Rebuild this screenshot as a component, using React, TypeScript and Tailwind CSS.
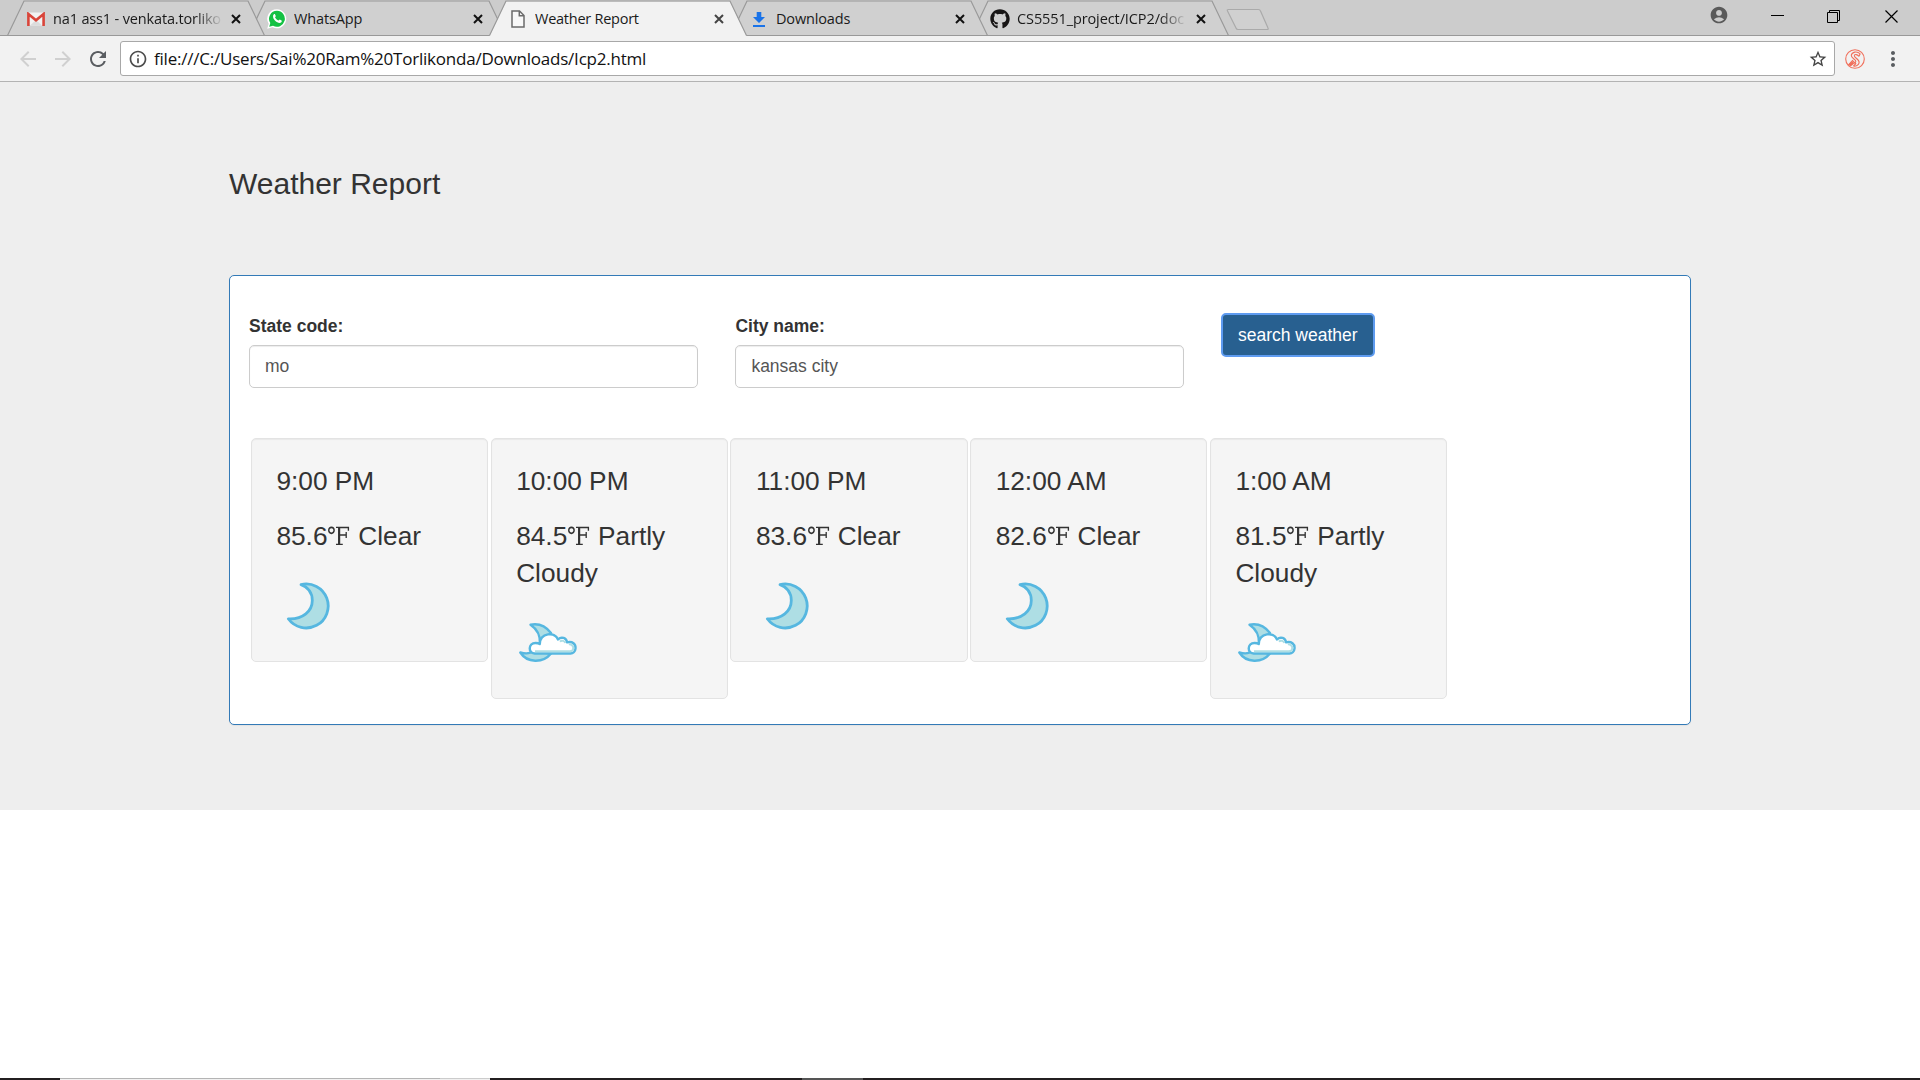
import type { ReactNode } from "react";
import { FaGithub } from "react-icons/fa";
import {
  MdAccountCircle,
  MdArrowBack,
  MdArrowForward,
  MdInfoOutline,
  MdMoreVert,
  MdRefresh,
  MdStarBorder,
} from "react-icons/md";

const uiFont = "font-['Open_Sans','Noto_Sans',sans-serif]";

function GmailIcon() {
  return (
    <svg width="18" height="14" viewBox="0 0 18 14">
      <rect x="0.5" y="0.5" width="17" height="13" rx="1" fill="#f2f2f2" />
      <path d="M3 13.5 9 8l6 5.500z" fill="#dcdcdc" />
      <path d="M1.400 14V2L9 8.200 16.600 2v12" fill="none" stroke="#d9453a" strokeWidth="2.600" />
    </svg>
  );
}

function WhatsAppIcon() {
  return (
    <svg width="20" height="20" viewBox="0 0 20 20">
      <path d="M10 .3a9.500 9.500 0 1 1-4.500 18L.2 19.800l1.500-5A9.500 9.500 0 0 1 10 .3z" fill="#fff" />
      <path d="M10 1.800a8 8 0 1 1-4 15l-3.800 1 1.100-3.700A8 8 0 0 1 10 1.800z" fill="#14c143" />
      <path
        d="M6.900 5.200c.5-.4 1-.3 1.200.2l.7 1.600c.1.400-.6 1-.8 1.300.7 1.500 2 2.700 3.500 3.300.4-.3.900-1.200 1.300-1.100l1.700.9c.5.300.3 1.300-.2 1.800-1.500 1.500-4.300.3-5.900-1.200C6.600 10.300 5 7 6.900 5.200z"
        fill="#fff"
      />
    </svg>
  );
}

function PageIcon() {
  return (
    <svg width="14" height="18" viewBox="0 0 14 18" fill="none" stroke="#6b6b6b" strokeWidth="1.500">
      <path d="M1 1h7.500L13 5.500V17H1z" fill="#f8f8f8" />
      <path d="M8.300 1v4.700H13" />
    </svg>
  );
}

function DownloadIcon() {
  return (
    <svg width="12" height="15" viewBox="0 0 12 15" fill="#1a73e8">
      <path d="M3.700 0h4.600v5H12l-6 6-6-6h3.700z" />
      <rect y="13" width="12" height="2" />
    </svg>
  );
}

function Close({ dark }: { dark: boolean }) {
  return (
    <svg width="10" height="10" viewBox="0 0 10 10" stroke={dark ? "#111" : "#444"} strokeWidth="2" className="shrink-0">
      <path d="M1 1l8 8M9 1l-8 8" />
    </svg>
  );
}

type TabProps = {
  icon: ReactNode;
  title: string;
  active?: boolean;
  fade?: boolean;
  z: string;
  spacing: string;
  closeOffset?: string;
};

function Tab({ icon, title, active = false, fade = false, z, spacing, closeOffset = "-mr-px" }: TabProps) {
  return (
    <div className={`relative -mr-[17px] h-9 w-[258px] shrink-0 ${z}`}>
      <svg className="absolute inset-0" width="258" height="36" viewBox="0 0 258 36">
        <path d="M.5 36 17 1.500h224L257.500 36z" fill={active ? "#f2f2f2" : "#d0d0d0"} />
        <path d="M.5 35.500 17 1h224l16.500 34.500" fill="none" stroke="#999" strokeWidth="1.200" />
        {!active && <path d="M0 35.500h258" stroke="#999" />}
      </svg>
      <div className="relative flex h-full items-center pt-[2px] pl-[18px] pr-6">
        <div className="flex w-[21px] shrink-0 justify-center">{icon}</div>
        <div
          className={`ml-[7px] w-[170px] overflow-hidden whitespace-nowrap text-[14.500px] leading-5 text-[#1a1a1a] ${spacing} ${
            fade ? "[mask-image:linear-gradient(to_right,black_84%,transparent_100%)]" : ""
          }`}
        >
          {title}
        </div>
        <div className={`ml-auto flex ${closeOffset}`}>
          <Close dark={!active} />
        </div>
      </div>
    </div>
  );
}

function TitleBar() {
  return (
    <div className="flex h-9 border-b border-[#999] bg-[#ccc] pl-[7px]">
      <Tab
        icon={<GmailIcon />}
        title="na1 ass1 - venkata.torliko"
        fade
        z="z-[3]"
        spacing="tracking-[-0.15px]"
        closeOffset="mr-0"
      />
      <Tab icon={<WhatsAppIcon />} title="WhatsApp" z="z-[2]" spacing="tracking-[-0.15px]" />
      <Tab icon={<PageIcon />} title="Weather Report" active z="z-[5]" spacing="tracking-[-0.25px]" />
      <Tab icon={<DownloadIcon />} title="Downloads" z="z-[2]" spacing="tracking-[-0.15px]" />
      <Tab
        icon={<FaGithub className="size-5 text-[#181616]" />}
        title="CS5551_project/ICP2/doc"
        fade
        z="z-[1]"
        spacing="tracking-[-0.1px]"
      />
      <svg className="mt-2 ml-[14px] shrink-0" width="44" height="23" viewBox="0 0 44 23">
        <path
          d="M2.500 1.500h30q1.500 0 2 1.500l7.500 17q.8 1.500-1 1.500H12q-1.500 0-2-1.500L1.500 3q-.8-1.500 1-1.500z"
          fill="#d0d0d0"
          stroke="#aaa"
          strokeWidth="1.200"
        />
      </svg>
      <div className="ml-auto flex pr-[22px] text-black">
        <MdAccountCircle className="mt-[5px] mr-[42px] size-5 text-[#5a5a5a]" />
        <svg className="mt-[9px] mr-[43px]" width="13" height="13" stroke="currentColor">
          <path d="M0 6.500h13" />
        </svg>
        <svg className="mt-[10px] mr-[45px]" width="13" height="13" fill="none" stroke="currentColor">
          <path d="M.5 2.500h10v10H.5zM2.500 2.500v-2h10v10h-2" />
        </svg>
        <svg className="mt-[10px]" width="13" height="13" stroke="currentColor" strokeWidth="1.200">
          <path d="M.5.5l12 12M12.500.5l-12 12" />
        </svg>
      </div>
    </div>
  );
}

function ExtensionIcon() {
  return (
    <svg width="20" height="20" viewBox="0 0 20 20" fill="none" stroke="#f0705c" strokeWidth="1.100">
      <circle cx="10" cy="10" r="9.300" />
      <path d="M15.200 4.800C12 1.800 7 2.800 6.300 6.200c-.4 3.300 4.700 4 4.500 6.200-.2 1.800-1.800 2.200-3.300 1.400M14 7.300C12.300 5.300 9.800 5 9.300 6.600c-.3 2.200 5.300 3.500 4.800 7.200-.5 2.400-3.300 3.600-5.600 3.200" />
      <path d="M15.200 4.800 14 7.300M3.500 15.800l4-4.300 3.300 3.200L8.500 17" />
      <path d="M4 15.800 7.500 13l.8 1.500-2.500 2.200z" fill="#f0705c" />
    </svg>
  );
}

function Toolbar() {
  return (
    <div className="flex h-[46px] items-center border-b border-[#b3b3b3] bg-[#f2f2f2]">
      <MdArrowBack className="ml-4 size-6 text-[#d0d0d0]" />
      <MdArrowForward className="ml-[11px] size-6 text-[#d0d0d0]" />
      <MdRefresh className="ml-[11px] size-6 text-[#5a5d61]" />
      <div className="ml-[10px] flex h-[35px] w-[1715px] items-center rounded-[3px] border border-[#a8a8a8] bg-white">
        <MdInfoOutline className="ml-[7px] size-[20px] text-[#4c4c4c]" />
        <span className="ml-[6px] whitespace-nowrap text-[17px] tracking-[-0.22px] text-[#111]">
          file:///C:/Users/Sai%20Ram%20Torlikonda/Downloads/Icp2.html
        </span>
        <MdStarBorder className="ml-auto mr-[6px] size-5 text-[#444]" />
      </div>
      <div className="ml-[10px]">
        <ExtensionIcon />
      </div>
      <MdMoreVert className="ml-[16px] size-6 text-[#5a5d61]" />
    </div>
  );
}

function MoonIcon() {
  return (
    <svg width="62" height="62" viewBox="0 0 62 62" fill="#aedee4" stroke="#56b7e0" strokeWidth="2.800" strokeLinejoin="round">
      <path d="M24 10.600A22 22 0 1 1 11.300 44.800C26 45.500 35.300 37 35.300 26.500 35.300 19 31 13 24 10.600z" />
    </svg>
  );
}

function CloudMoonIcon() {
  return (
    <svg width="62" height="62" viewBox="0 0 62 62" fill="#aedee4" stroke="#56b7e0" strokeWidth="2.400" strokeLinejoin="round">
      <path d="M13.500 13.700C22 12 29 15.500 34 22l-11 11C23.500 25 20 18 13.500 13.700z" />
      <path d="M3.300 41.500C9 43 14 42 16 40l18 2.500C26 52.500 10 52 3.300 41.500z" />
      <path
        d="M17.500 42.500c-6.500 0-6.500-10.500 1-10.500 1.500 0 3 0 4.300 1 .5-11.500 15-12.500 18.200-4.500 3.500-3.500 8.500-1.500 9 2.800C55.500 30 59 33 58.500 37.500c-.3 3-2.500 5-5 5z"
        fill="#fff"
      />
      <path
        d="M18 40.300h35c2 0 3.300-1.500 3.300-3.300 0-2.500-2-4-4.500-3.700M48.300 32c-.8-2-3-3.200-5.500-1.500"
        fill="none"
        stroke="#aedee4"
        strokeWidth="2"
      />
    </svg>
  );
}

type Hour = { time: string; temp: string; sky: string; cloudy?: boolean };

const hours: Hour[] = [
  { time: "9:00 PM", temp: "85.6", sky: "Clear" },
  { time: "10:00 PM", temp: "84.5", sky: "Partly Cloudy", cloudy: true },
  { time: "11:00 PM", temp: "83.6", sky: "Clear" },
  { time: "12:00 AM", temp: "82.6", sky: "Clear" },
  { time: "1:00 AM", temp: "81.5", sky: "Partly Cloudy", cloudy: true },
];

function HourCard({ time, temp, sky, cloudy }: Hour) {
  return (
    <div className="w-[237.250px] rounded-[5px] border border-[#e3e3e3] bg-[#f5f5f5] py-[23.750px] pr-[23px] pl-[24.500px] text-[26.250px] leading-[36.750px] shadow-[inset_0_1px_1px_rgba(0,0,0,0.05)]">
      <p className="mb-[18.750px]">{time}</p>
      <p className="mb-[18.750px]">
        {temp}
        <span className="inline-block w-[23.500px] origin-left scale-x-[0.880] font-['Liberation_Serif','DejaVu_Serif',serif] text-[25px] leading-none">
          ℉
        </span>{" "}
        {sky}
      </p>
      <div className="ml-[0.500px] h-[63.500px]">{cloudy ? <CloudMoonIcon /> : <MoonIcon />}</div>
    </div>
  );
}

function Field({ label, value }: { label: string; value: string }) {
  return (
    <label className="mt-px block w-[449px]">
      <span className="mb-[6px] block font-bold">{label}</span>
      <input
        defaultValue={value}
        className="block h-[43px] w-full rounded-[5px] border border-[#ccc] bg-white px-[15px] text-[#555] shadow-[inset_0_1px_1px_rgba(0,0,0,0.075)]"
      />
    </label>
  );
}

export default function App() {
  return (
    <div className="flex h-[1080px] w-[1920px] flex-col overflow-hidden bg-white">
      <header className={uiFont}>
        <TitleBar />
        <Toolbar />
      </header>

      <main className="h-[728px] bg-[#eee] px-[229px] pt-[85px] font-['Liberation_Sans',Arial,sans-serif] text-[17.500px] leading-[25px] text-[#333]">
        <h1 className="text-[30px] leading-[33px]">Weather Report</h1>
        <section className="mt-[75px] h-[450px] rounded-[5px] border border-[#337ab7] bg-white px-[19px] pt-[37px] shadow-[0_1px_1px_rgba(0,0,0,0.05)]">
          <div className="flex items-start gap-[37.400px]">
            <Field label="State code:" value="mo" />
            <Field label="City name:" value="kansas city" />
            <button className="mt-px h-[42px] w-[152px] rounded-[4px] bg-[#286090] pt-px text-white outline-2 outline-[#5e9bf0] -outline-offset-1">
              search weather
            </button>
          </div>
          <div className="mt-[50px] ml-[1.900px] flex items-start gap-[2.500px]">
            {hours.map((h) => (
              <HourCard key={h.time} {...h} />
            ))}
          </div>
        </section>
      </main>

      <footer className="mt-auto flex h-[2px] bg-[#231f20]">
        <div className="ml-[60px] w-[380px] border-t border-[#b4b4b4] bg-[#f0f0f0]" />
        <div className="w-[50px] border-t border-[#ccc] bg-[#f0f0f0]" />
        <div className="ml-[312px] w-[61px] bg-[#555]" />
      </footer>
    </div>
  );
}
